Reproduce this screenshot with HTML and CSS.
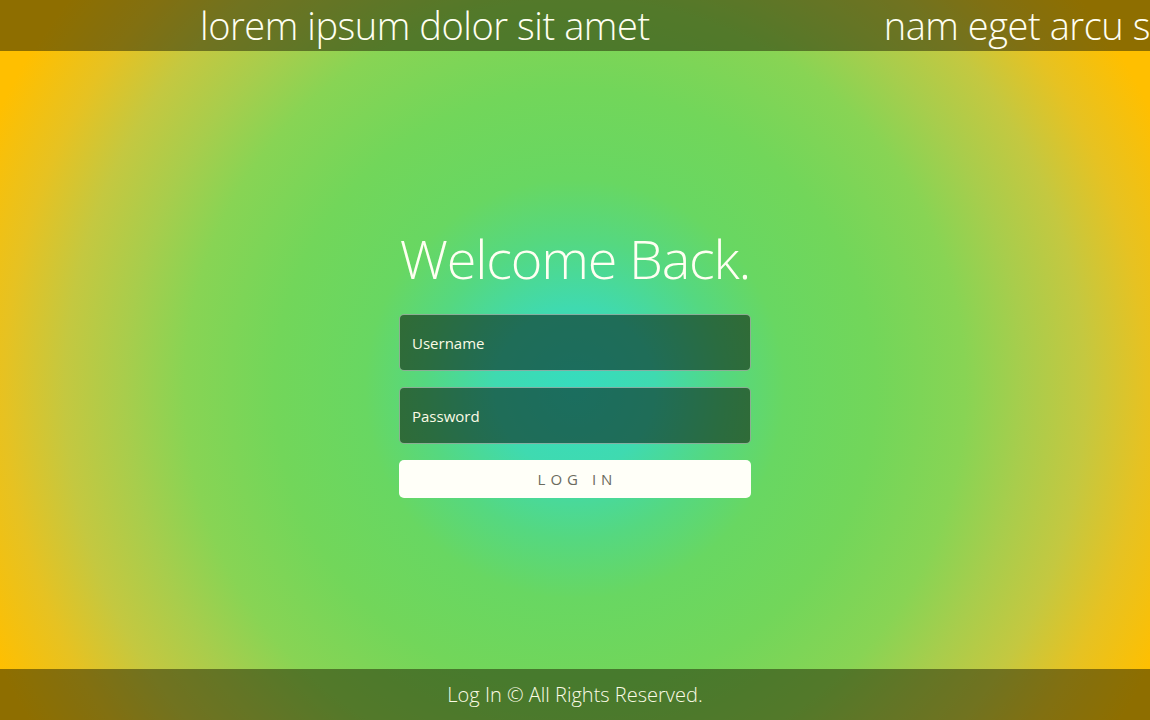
FILE: index.html
```html
<!DOCTYPE html>
<html lang="en">
<head>
<meta charset="utf-8">
<title>Log In</title>
<link rel="stylesheet" href="styles.css">
</head>
<body>
<div class="page">
  <header class="ticker">
    <div class="ticker-track">
      <span class="ticker-item">lorem ipsum dolor sit amet</span>
      <span class="ticker-item">nam eget arcu sed lorem</span>
    </div>
  </header>
  <main class="main">
    <form class="login">
      <h1 class="title">Welcome Back.</h1>
      <input class="field" type="text" placeholder="Username">
      <input class="field" type="password" placeholder="Password">
      <button class="btn" type="button">Log In</button>
    </form>
  </main>
  <footer class="footer">Log In © All Rights Reserved.</footer>
</div>
</body>
</html>
```
FILE: styles.css
```css
html, body {
  margin: 0;
  padding: 0;
  height: 100%;
}
body {
  font-family: "Open Sans", "Noto Sans", sans-serif;
  font-weight: 300;
  color: #fffff0;
  overflow: hidden;
}
.page {
  height: 720px;
  display: flex;
  flex-direction: column;
  background: radial-gradient(circle at 50% 54%, #36dcbe 0px, #3fdab0 80px, #55d880 150px, #68d762 210px, #72d65a 300px, #88d454 390px, #a8cd4c 450px, #c4c840 510px, #e6c222 570px, #ffbf00 640px);
}
.ticker {
  height: 51px;
  flex: none;
  background: rgba(30, 30, 0, 0.5);
  overflow: hidden;
}
.ticker-track {
  display: flex;
  gap: 234px;
  padding-left: 200px;
  white-space: nowrap;
}
.ticker-item {
  font-size: 38px;
  line-height: 51px;
  font-weight: 300;
  letter-spacing: -0.45px;
  color: #fffff2;
}
.main {
  flex: 1;
  display: flex;
  align-items: center;
  justify-content: center;
}
.login {
  width: 352px;
  display: flex;
  flex-direction: column;
  margin-top: 5px;
}
.title {
  margin: 0 0 25px;
  font-size: 54px;
  font-weight: 300;
  line-height: 62px;
  letter-spacing: -1.2px;
  color: #fffff2;
  text-align: center;
  white-space: nowrap;
}
.field {
  box-sizing: border-box;
  height: 57px;
  margin: 0 0 16px;
  padding: 0 12px;
  border: 1px solid rgba(255, 255, 255, 0.45);
  border-radius: 5px;
  background: rgba(0, 0, 0, 0.5);
  font-family: inherit;
  font-size: 15px;
  font-weight: 400;
  color: #fffff0;
  outline: none;
}
.field::placeholder {
  color: #fbfbe6;
  opacity: 1;
}
.btn {
  height: 38px;
  border: none;
  border-radius: 5px;
  background: #fffff8;
  font-family: inherit;
  font-size: 15px;
  font-weight: 400;
  letter-spacing: 5px;
  text-transform: uppercase;
  color: #6b6b5e;
  padding: 0 0 0 5px;
  cursor: pointer;
}
.footer {
  height: 51px;
  flex: none;
  background: rgba(30, 30, 0, 0.5);
  text-align: center;
  font-size: 20px;
  font-weight: 300;
  line-height: 51px;
  color: #fbfbe6;
}
```
